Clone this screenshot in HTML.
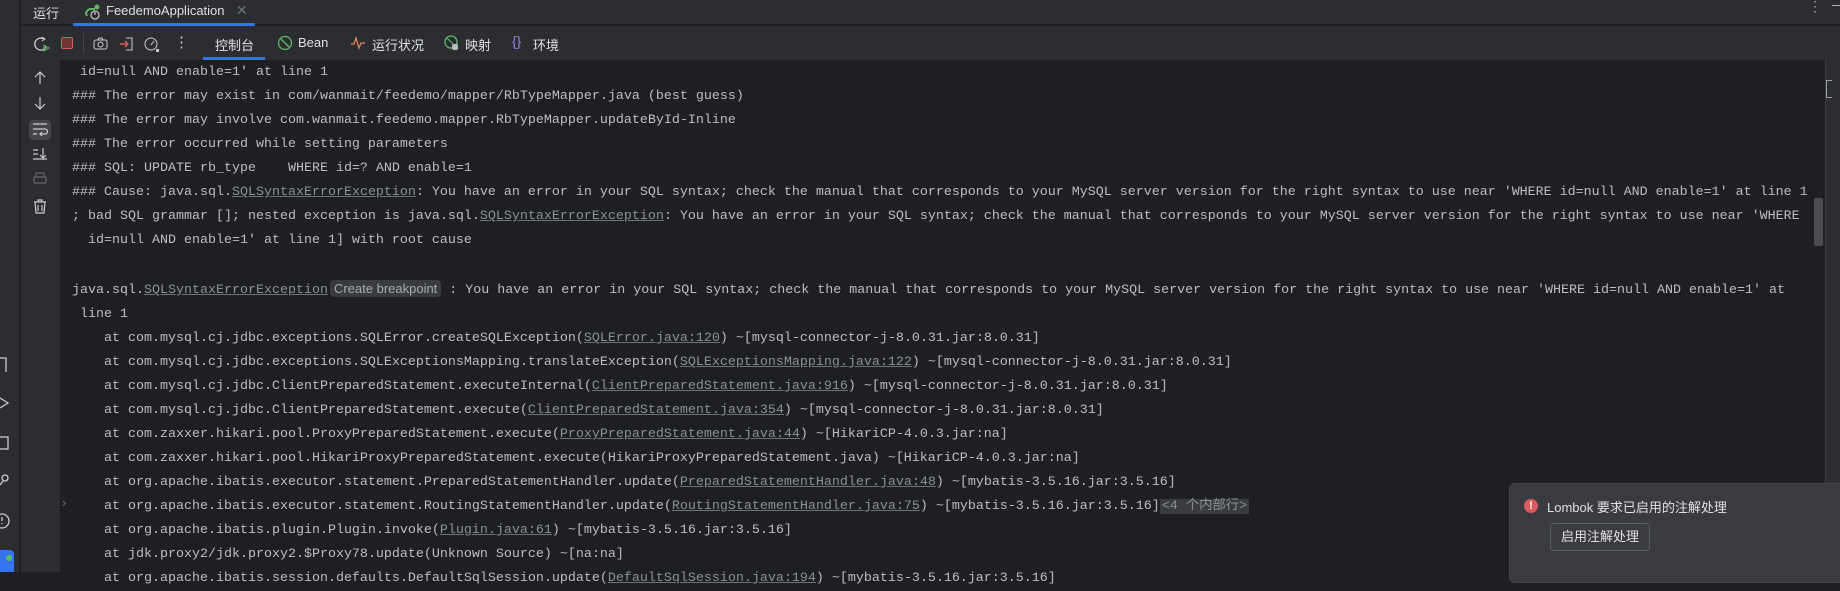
<!DOCTYPE html>
<html><head><meta charset="utf-8"><style>
*{margin:0;padding:0;box-sizing:border-box}
body{width:1840px;height:572px;overflow:hidden;background:#1e1f22;position:relative;font-family:"Liberation Sans","Noto Sans CJK SC",sans-serif;color:#dfe1e5}
.abs{position:absolute}
#strip{left:0;top:0;width:20px;height:572px;background:#2b2d30;border-right:1px solid #1e1f22}
#tabs{left:21px;top:0;width:1819px;height:25px;background:#2b2d30;border-bottom:1px solid #1e1f22}
#tool{left:21px;top:26px;width:1819px;height:34px;background:#2b2d30}
#gut{left:21px;top:60px;width:39px;height:512px;background:#2b2d30}
#right{left:1825px;top:60px;width:15px;height:512px;background:#2b2d30;border-left:1px solid #393b40}
.t{font-size:13px;color:#dfe1e5;white-space:nowrap}
#con{left:72px;top:61px;font-family:"Liberation Mono",monospace;font-size:13.33px;line-height:24px;color:#bcbec4;white-space:pre}
u{text-decoration:underline;text-decoration-color:#6f737a;color:#8c9097}
.bp{font-family:"Liberation Sans",sans-serif;font-size:13px;background:#393b40;color:#a8abb2;border-radius:4px;padding:1px 4px;margin-left:2px}
.fold{background:#393b40;color:#8c9097;padding:0 2px}
svg{position:absolute}
</style></head><body>
<div class="abs" id="strip"></div>
<div class="abs" id="tabs"></div>
<div class="abs" id="tool"></div>
<div class="abs" id="gut"></div>
<div class="abs" id="right"></div>
<div class="abs" style="left:1814px;top:198px;width:9px;height:48px;background:#4a4c52;border-radius:2px"></div>
<div class="abs" style="left:1826px;top:80px;width:6px;height:18px;border:1px solid #9da0a8;border-right:none"></div>

<div class="abs t" style="left:33px;top:3px;font-size:13px">运行</div>
<svg style="left:84px;top:3px" width="18" height="18" viewBox="0 0 18 18"><path d="M3 13c-2-3 0-7 4-7h4" stroke="#5fb865" stroke-width="2" fill="none"/><circle cx="13" cy="4" r="2.5" fill="#5fb865"/><circle cx="11" cy="12" r="4" fill="none" stroke="#ccc" stroke-width="1.2"/><path d="M11 9v3" stroke="#ccc" stroke-width="1.2"/></svg>
<div class="abs t" style="left:106px;top:3px">FeedemoApplication</div>
<div class="abs t" style="left:236px;top:2px;color:#6f737a;font-size:14px">✕</div>
<div class="abs" style="left:73px;top:23px;width:182px;height:3px;background:#3574f0;border-radius:2px"></div>
<div class="abs t" style="left:1808px;top:-2px;color:#aaa;font-size:14px">⋮</div>
<div class="abs" style="left:1832px;top:5px;width:8px;height:1px;background:#aaa"></div>

<svg style="left:33px;top:35px" width="18" height="18"><path d="M11 4a6 6 0 1 0 2 8" stroke="#ccc" stroke-width="1.3" fill="none"/><path d="M9 2l3 2-3 2" stroke="#ccc" fill="none"/><path d="M11 10l5 3-5 3z" stroke="#5fb865" fill="none"/></svg>
<div class="abs" style="left:61px;top:37px;width:12px;height:12px;background:#6e3535;border:1.3px solid #db5c5c;border-radius:2px"></div>
<div class="abs" style="left:83px;top:33px;width:1px;height:20px;background:#43454a"></div>
<svg style="left:92px;top:35px" width="18" height="18"><rect x="2" y="5" width="13" height="9" rx="2" stroke="#ccc" fill="none"/><circle cx="8.5" cy="9.5" r="2.5" stroke="#ccc" fill="none"/><path d="M6 5l1-2h3l1 2" stroke="#ccc" fill="none"/></svg>
<svg style="left:119px;top:35px" width="18" height="18"><path d="M7 3h6v12H7" stroke="#ccc" fill="none"/><path d="M1 9h8M6 6l3 3-3 3" stroke="#db5c5c" stroke-width="1.4" fill="none"/></svg>
<svg style="left:143px;top:35px" width="18" height="18"><circle cx="8" cy="9" r="6" stroke="#ccc" fill="none"/><path d="M8 10l3-4" stroke="#ccc"/><rect x="13" y="14" width="3" height="3" fill="#ccc"/></svg>
<div class="abs t" style="left:174px;top:33px;color:#ccc;font-size:15px">⋮</div>
<div class="abs t" style="left:215px;top:35px">控制台</div>
<div class="abs" style="left:203px;top:57px;width:62px;height:3px;background:#3574f0"></div>
<svg style="left:277px;top:35px" width="16" height="16"><circle cx="8" cy="8" r="6.5" stroke="#5fb865" stroke-width="1.3" fill="none"/><path d="M4 4l8 8" stroke="#5fb865" stroke-width="1.3"/></svg>
<div class="abs t" style="left:298px;top:35px">Bean</div>
<svg style="left:350px;top:35px" width="16" height="16"><path d="M1 9h3l2-6 3 10 2-5h4" stroke="#e0875e" stroke-width="1.3" fill="none"/></svg>
<div class="abs t" style="left:372px;top:35px">运行状况</div>
<svg style="left:444px;top:35px" width="16" height="16"><circle cx="7" cy="7" r="6" stroke="#5fb865" stroke-width="1.3" fill="none"/><path d="M3 3l8 8" stroke="#5fb865"/><rect x="8" y="9" width="6" height="6" rx="2" fill="#bbb"/></svg>
<div class="abs t" style="left:465px;top:35px">映射</div>
<div class="abs t" style="left:512px;top:33px;color:#9b7ee8;font-size:14px">{}</div>
<div class="abs t" style="left:533px;top:35px">环境</div>

<svg style="left:30px;top:68px" width="20" height="150" stroke="#ccc" fill="none" stroke-width="1.2"><path d="M10 4v12M5 9l5-5 5 5"/><path d="M10 29v12M5 36l5 5 5-5"/></svg>
<div class="abs" style="left:29px;top:120px;width:22px;height:20px;background:#43454a;border-radius:4px"></div>
<svg style="left:30px;top:68px" width="20" height="150" stroke="#ccc" fill="none" stroke-width="1.2"><path d="M3 56h14M3 61h12a2.5 2.5 0 0 1 0 5h-4M3 66h4M12 64l-2 2 2 2"/><path d="M3 82h5M3 86h5M3 91h14M13 80v10M10 87l3 3 3-3"/><rect x="4" y="109" width="12" height="6" rx="1" stroke="#666"/><rect x="6" y="105" width="8" height="4" stroke="#666"/><path d="M4 134h12M8 134v-2h4v2M5 134l1 11h8l1-11M8 137v6M12 137v6"/></svg>
<div class="abs t" style="left:62px;top:495px;color:#777;font-size:13px">›</div>
<svg style="left:0;top:355px" width="20" height="217" stroke="#ccc" fill="none" stroke-width="1.3"><path d="M0 3h6v14"/><path d="M0 43l8 5-8 5"/><rect x="-4" y="82" width="12" height="12"/><circle cx="5" cy="123" r="3"/><path d="M3 126l-3 4"/><circle cx="2" cy="166" r="7"/><path d="M2 162v4M2 168v1"/></svg>
<div class="abs" style="left:0;top:550px;width:14px;height:22px;background:#3574f0;border-radius:0 4px 0 0"></div>
<div class="abs" style="left:6px;top:555px;width:6px;height:6px;background:#5fb865;border-radius:50%"></div>

<div class="abs" id="con"> id=null AND enable=1' at line 1
### The error may exist in com/wanmait/feedemo/mapper/RbTypeMapper.java (best guess)
### The error may involve com.wanmait.feedemo.mapper.RbTypeMapper.updateById-Inline
### The error occurred while setting parameters
### SQL: UPDATE rb_type    WHERE id=? AND enable=1
### Cause: java.sql.<u>SQLSyntaxErrorException</u>: You have an error in your SQL syntax; check the manual that corresponds to your MySQL server version for the right syntax to use near 'WHERE id=null AND enable=1' at line 1
; bad SQL grammar []; nested exception is java.sql.<u>SQLSyntaxErrorException</u>: You have an error in your SQL syntax; check the manual that corresponds to your MySQL server version for the right syntax to use near 'WHERE
  id=null AND enable=1' at line 1] with root cause

java.sql.<u>SQLSyntaxErrorException</u><span class="bp">Create breakpoint</span> : You have an error in your SQL syntax; check the manual that corresponds to your MySQL server version for the right syntax to use near 'WHERE id=null AND enable=1' at
 line 1
    at com.mysql.cj.jdbc.exceptions.SQLError.createSQLException(<u>SQLError.java:120</u>) ~[mysql-connector-j-8.0.31.jar:8.0.31]
    at com.mysql.cj.jdbc.exceptions.SQLExceptionsMapping.translateException(<u>SQLExceptionsMapping.java:122</u>) ~[mysql-connector-j-8.0.31.jar:8.0.31]
    at com.mysql.cj.jdbc.ClientPreparedStatement.executeInternal(<u>ClientPreparedStatement.java:916</u>) ~[mysql-connector-j-8.0.31.jar:8.0.31]
    at com.mysql.cj.jdbc.ClientPreparedStatement.execute(<u>ClientPreparedStatement.java:354</u>) ~[mysql-connector-j-8.0.31.jar:8.0.31]
    at com.zaxxer.hikari.pool.ProxyPreparedStatement.execute(<u>ProxyPreparedStatement.java:44</u>) ~[HikariCP-4.0.3.jar:na]
    at com.zaxxer.hikari.pool.HikariProxyPreparedStatement.execute(HikariProxyPreparedStatement.java) ~[HikariCP-4.0.3.jar:na]
    at org.apache.ibatis.executor.statement.PreparedStatementHandler.update(<u>PreparedStatementHandler.java:48</u>) ~[mybatis-3.5.16.jar:3.5.16]
    at org.apache.ibatis.executor.statement.RoutingStatementHandler.update(<u>RoutingStatementHandler.java:75</u>) ~[mybatis-3.5.16.jar:3.5.16]<span class="fold"><span style="font-family:'Liberation Mono','Noto Sans CJK SC',monospace">&lt;4 个内部行&gt;</span></span>
    at org.apache.ibatis.plugin.Plugin.invoke(<u>Plugin.java:61</u>) ~[mybatis-3.5.16.jar:3.5.16]
    at jdk.proxy2/jdk.proxy2.$Proxy78.update(Unknown Source) ~[na:na]
    at org.apache.ibatis.session.defaults.DefaultSqlSession.update(<u>DefaultSqlSession.java:194</u>) ~[mybatis-3.5.16.jar:3.5.16]</div>

<div class="abs" style="left:1509px;top:483px;width:340px;height:100px;background:#393b40;border-radius:6px;border:1px solid #43454a"></div>
<div class="abs" style="left:1524px;top:499px;width:14px;height:14px;border-radius:50%;background:#db5c5c;color:#fff;font-size:11px;font-weight:bold;text-align:center;line-height:14px">!</div>
<div class="abs t" style="left:1547px;top:497px">Lombok 要求已启用的注解处理</div>
<div class="abs t" style="left:1550px;top:523px;width:100px;height:28px;border:1px solid #5a5d63;border-radius:4px;text-align:center;line-height:26px">启用注解处理</div>
</body></html>
